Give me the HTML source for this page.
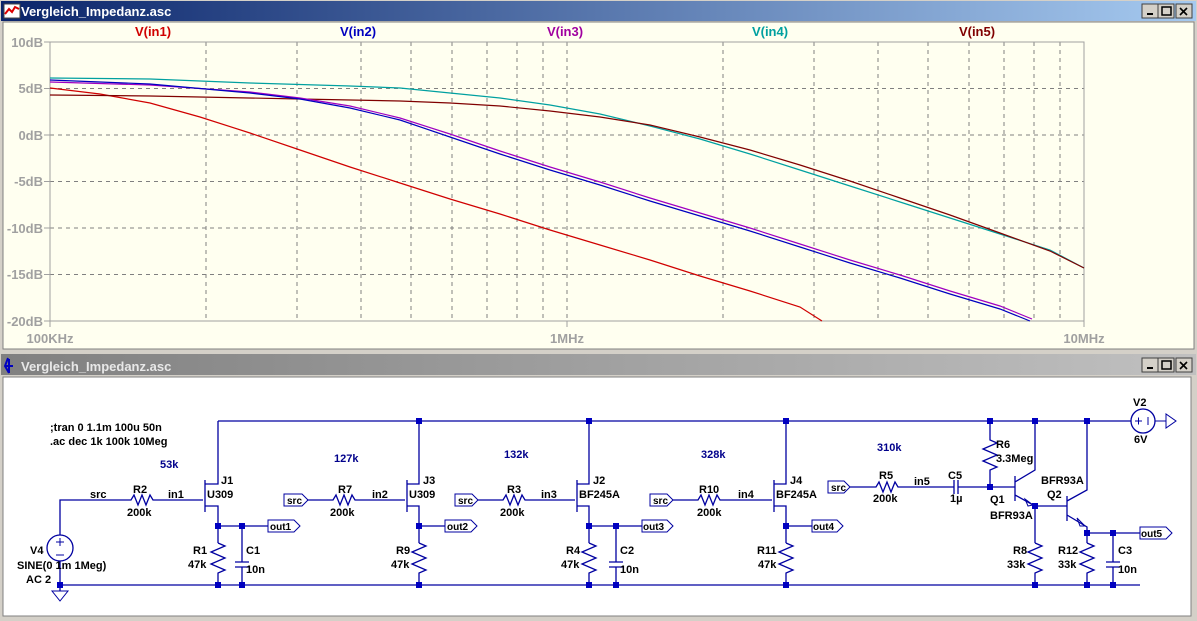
<!DOCTYPE html>
<html><head><meta charset="utf-8">
<style>
html,body{margin:0;padding:0;background:#d4d0c8;width:1197px;height:621px;overflow:hidden;font-family:"Liberation Sans",sans-serif}
svg text{font-family:"Liberation Sans",sans-serif;font-weight:bold}
</style></head><body>
<svg width="1197" height="621" viewBox="0 0 1197 621" xmlns="http://www.w3.org/2000/svg">
<defs>
<linearGradient id="ta" x1="0" x2="1"><stop offset="0" stop-color="#0a246a"/><stop offset="1" stop-color="#a6caf0"/></linearGradient>
<linearGradient id="ti" x1="0" x2="1"><stop offset="0" stop-color="#808080"/><stop offset="1" stop-color="#c0c0c0"/></linearGradient>
</defs>
<rect width="1197" height="621" fill="#d4d0c8"/>
<!-- top window -->
<rect x="1" y="1" width="1195" height="20" fill="url(#ta)"/>
<rect x="4" y="4" width="16" height="14" fill="#fff" stroke="#444"/>
<path d="M5 14 L9 9 L12 12 L15 7 L19 9" stroke="#d00" stroke-width="2" fill="none"/>
<text x="21" y="16" font-size="13" fill="#fff">Vergleich_Impedanz.asc</text>
<g font-size="12" font-family="Liberation Sans">
<rect x="1142" y="4" width="16" height="14" fill="#d4d0c8" stroke="#404040"/><rect x="1147" y="13" width="6" height="2" fill="#000"/>
<rect x="1158" y="4" width="16" height="14" fill="#d4d0c8" stroke="#404040"/><rect x="1162" y="7" width="9" height="8" fill="none" stroke="#000" stroke-width="1.5"/>
<rect x="1176" y="4" width="16" height="14" fill="#d4d0c8" stroke="#404040"/><path d="M1180 8 L1187 15 M1187 8 L1180 15" stroke="#000" stroke-width="1.6"/>
</g>
<rect x="3" y="22" width="1191" height="327" fill="#fffff0" stroke="#808080"/>
<!-- grid -->
<g stroke="#808080" stroke-width="1" stroke-dasharray="4,4" fill="none">
<path d="M206 42V321M297 42V321M361 42V321M411 42V321M452 42V321M487 42V321M517 42V321M543 42V321M567 42V321M723 42V321M814 42V321M878 42V321M928 42V321M969 42V321M1004 42V321M1034 42V321M1060 42V321"/>
<path d="M50 88.5H1084M50 135H1084M50 181.5H1084M50 228H1084M50 274.5H1084"/>
</g>
<rect x="50" y="42" width="1034" height="279" fill="none" stroke="#a0a0a0"/>
<g stroke="#a0a0a0"><path d="M44 42H50M44 88.5H50M44 135H50M44 181.5H50M44 228H50M44 274.5H50M44 321H50M50 321V327M567 321V327M1084 321V327"/></g>
<g font-size="13" fill="#a0a0a0" text-anchor="end">
<text x="43" y="47">10dB</text><text x="43" y="93">5dB</text><text x="43" y="140">0dB</text><text x="43" y="186">-5dB</text><text x="43" y="233">-10dB</text><text x="43" y="279">-15dB</text><text x="43" y="326">-20dB</text>
</g>
<g font-size="13" fill="#a0a0a0" text-anchor="middle">
<text x="50" y="343">100KHz</text><text x="567" y="343">1MHz</text><text x="1084" y="343">10MHz</text>
</g>
<g font-size="13" text-anchor="middle">
<text x="153" y="36" fill="#d00000">V(in1)</text>
<text x="358" y="36" fill="#0000c0">V(in2)</text>
<text x="565" y="36" fill="#a000a0">V(in3)</text>
<text x="770" y="36" fill="#00a0a0">V(in4)</text>
<text x="977" y="36" fill="#800000">V(in5)</text>
</g>
<g fill="none" stroke-width="1.2">
<polyline stroke="#d00000" points="50,88 100,94 150,103 200,117 250,133 300,150 350,167 400,183 450,199 500,214 550,230 600,245 650,260 700,276 750,291 800,307 822,321"/>
<polyline stroke="#00a0a0" points="50,78 150,79 250,83 350,86 400,88 450,93 500,98 550,105 600,114 650,126 700,139 750,154 800,170 850,186 900,202 950,218 1000,234 1050,250 1084,268"/>
<polyline stroke="#800000" points="50,95 150,96 300,99 400,101 450,103 500,106 550,111 600,117 650,125 700,137 750,150 800,165 850,181 900,198 950,215 1000,233 1050,251 1084,268"/>
<polyline stroke="#a000c0" points="50,82 150,85 250,92 300,98 350,106 400,118 450,134 500,151 550,167 600,182 650,198 700,213 750,228 800,244 850,260 900,275 950,291 1000,306 1032,319"/>
<polyline stroke="#0000c0" points="50,80 150,84 250,93 300,99 350,108 400,120 450,137 500,154 550,170 600,185 650,201 700,216 750,231 800,247 850,263 900,278 950,294 1000,309 1030,321"/>
</g>
<!-- bottom window -->
<rect x="1" y="354" width="1195" height="21" fill="url(#ti)"/>
<path d="M8 358 L5 366 L9 373 M5 366 L13 366 M9 359 L9 373" stroke="#0000c0" stroke-width="2" fill="none"/>
<text x="21" y="371" font-size="13" fill="#e8e8e8">Vergleich_Impedanz.asc</text>
<rect x="1142" y="358" width="16" height="14" fill="#d4d0c8" stroke="#404040"/><rect x="1147" y="367" width="6" height="2" fill="#000"/>
<rect x="1158" y="358" width="16" height="14" fill="#d4d0c8" stroke="#404040"/><rect x="1162" y="361" width="9" height="8" fill="none" stroke="#000" stroke-width="1.5"/>
<rect x="1176" y="358" width="16" height="14" fill="#d4d0c8" stroke="#404040"/><path d="M1180 362 L1187 369 M1187 362 L1180 369" stroke="#000" stroke-width="1.6"/>
<rect x="3" y="377" width="1188" height="239" fill="#fff" stroke="#808080"/>
<!-- schematic -->
<g stroke="#0000a0" stroke-width="1.3" fill="none">
<!-- rails -->
<path d="M218 421H1131M60 585H1140"/>
<!-- stage1 -->
<path d="M60 535V500H128M155 500H203M205 480V512M205 484H218V421M205 506H218V543M218 577V585M218 526H268M242 526V562M235 562H249M235 567H249M242 567V585M60 561V585M60 585V591"/>
<path d="M128 500l3 0 3-5 4 10 4-10 4 10 4-10 3 5 2 0"/>
<path d="M218 543l7 3-14 6 14 6-14 6 14 6-7 3v4"/>
<circle cx="60" cy="548" r="13"/>
<path d="M56 542h8M60 538v8M56 555h8" stroke-width="1"/>
<path d="M52 591H68L60 601Z" stroke-width="1"/>
<path d="M268 520H294L300 526L294 532H268Z" stroke-width="1"/>
<!-- stage2 -->
<path d="M307 500H330M357 500H405M407 480V512M407 484H419V421M407 506H419V543M419 577V585M419 526H445"/>
<path d="M330 500l3 0 3-5 4 10 4-10 4 10 4-10 3 5 2 0"/>
<path d="M419 543l7 3-14 6 14 6-14 6 14 6-7 3v4"/>
<path d="M284 494H302L308 500L302 506H284Z" stroke-width="1"/>
<path d="M445 520H471L477 526L471 532H445Z" stroke-width="1"/>
<!-- stage3 -->
<path d="M478 500H500M527 500H575M577 480V512M577 484H589V421M577 506H589V543M589 577V585M589 526H642M616 526V562M609 562H623M609 567H623M616 567V585"/>
<path d="M500 500l3 0 3-5 4 10 4-10 4 10 4-10 3 5 2 0"/>
<path d="M589 543l7 3-14 6 14 6-14 6 14 6-7 3v4"/>
<path d="M455 494H472L478 500L472 506H455Z" stroke-width="1"/>
<path d="M642 520H667L673 526L667 532H642Z" stroke-width="1"/>
<!-- stage4 -->
<path d="M673 500H695M722 500H772M774 480V512M774 484H786V421M774 506H786V543M786 577V585M786 526H812"/>
<path d="M695 500l3 0 3-5 4 10 4-10 4 10 4-10 3 5 2 0"/>
<path d="M786 543l7 3-14 6 14 6-14 6 14 6-7 3v4"/>
<path d="M650 494H667L673 500L667 506H650Z" stroke-width="1"/>
<path d="M812 520H837L843 526L837 532H812Z" stroke-width="1"/>
<!-- stage5 -->
<path d="M850 487H873M900 487H954M954 480V494M958 480V494M958 487H1015M1015 476V501M1015 482L1035 470V421M1015 495L1035 506V543M1035 577V585M1035 506H1067M1067 496V521M1067 501L1087 490V421M1067 515L1087 527V533H1140M1087 533V543M1087 577V585M1113 533V562M1106 562H1120M1106 567H1120M1113 567V585"/>
<path d="M990 421V440l7 3-14 6 14 6-14 6 14 6-7 3V487"/>
<path d="M873 487l3 0 3-5 4 10 4-10 4 10 4-10 3 5 2 0"/>
<path d="M1035 543l7 3-14 6 14 6-14 6 14 6-7 3v4"/>
<path d="M1087 543l7 3-14 6 14 6-14 6 14 6-7 3v4"/>
<path d="M1025 499L1033 505L1028 506Z M1077 518L1085 526L1080 526Z" stroke-width="1"/>
<path d="M828 481H844L850 487L844 493H828Z" stroke-width="1"/>
<path d="M1140 527H1166L1172 533L1166 539H1140Z" stroke-width="1"/>
<circle cx="1143" cy="421" r="12"/>
<path d="M1135 421h7M1138.5 417.5v7M1148 417v8" stroke-width="1"/>
<path d="M1155 421H1166M1166 414V428L1176 421Z" stroke-width="1"/>
</g>
<g fill="#0000c0">
<rect x="57" y="582" width="6" height="6"/>
<rect x="215" y="523" width="6" height="6"/><rect x="239" y="523" width="6" height="6"/><rect x="215" y="582" width="6" height="6"/><rect x="239" y="582" width="6" height="6"/>
<rect x="416" y="418" width="6" height="6"/><rect x="416" y="523" width="6" height="6"/><rect x="416" y="582" width="6" height="6"/>
<rect x="586" y="418" width="6" height="6"/><rect x="586" y="523" width="6" height="6"/><rect x="613" y="523" width="6" height="6"/><rect x="586" y="582" width="6" height="6"/><rect x="613" y="582" width="6" height="6"/>
<rect x="783" y="418" width="6" height="6"/><rect x="783" y="523" width="6" height="6"/><rect x="783" y="582" width="6" height="6"/>
<rect x="987" y="418" width="6" height="6"/><rect x="987" y="484" width="6" height="6"/><rect x="1032" y="418" width="6" height="6"/><rect x="1032" y="503" width="6" height="6"/><rect x="1084" y="418" width="6" height="6"/><rect x="1084" y="530" width="6" height="6"/><rect x="1110" y="530" width="6" height="6"/><rect x="1032" y="582" width="6" height="6"/><rect x="1084" y="582" width="6" height="6"/><rect x="1110" y="582" width="6" height="6"/>
</g>
<g font-size="11" fill="#000">
<text x="50" y="431">;tran 0 1.1m 100u 50n</text>
<text x="50" y="445">.ac dec 1k 100k 10Meg</text>
<text x="90" y="498">src</text><text x="133" y="493">R2</text><text x="127" y="516">200k</text><text x="168" y="498">in1</text>
<text x="221" y="484">J1</text><text x="207" y="498">U309</text>
<text x="193" y="554">R1</text><text x="188" y="568">47k</text><text x="246" y="554">C1</text><text x="246" y="573">10n</text>
<text x="30" y="554">V4</text><text x="17" y="569">SINE(0 1m 1Meg)</text><text x="26" y="583">AC 2</text>
<text x="270" y="530" font-size="10">out1</text>
<text x="287" y="504" font-size="10">src</text><text x="338" y="493">R7</text><text x="330" y="516">200k</text><text x="372" y="498">in2</text>
<text x="423" y="484">J3</text><text x="409" y="498">U309</text><text x="396" y="554">R9</text><text x="391" y="568">47k</text>
<text x="447" y="530" font-size="10">out2</text>
<text x="458" y="504" font-size="10">src</text><text x="507" y="493">R3</text><text x="500" y="516">200k</text><text x="541" y="498">in3</text>
<text x="593" y="484">J2</text><text x="579" y="498">BF245A</text><text x="566" y="554">R4</text><text x="561" y="568">47k</text><text x="620" y="554">C2</text><text x="620" y="573">10n</text>
<text x="643" y="530" font-size="10">out3</text>
<text x="653" y="504" font-size="10">src</text><text x="699" y="493">R10</text><text x="697" y="516">200k</text><text x="738" y="498">in4</text>
<text x="790" y="484">J4</text><text x="776" y="498">BF245A</text><text x="757" y="554">R11</text><text x="758" y="568">47k</text>
<text x="813" y="530" font-size="10">out4</text>
<text x="831" y="491" font-size="10">src</text><text x="879" y="479">R5</text><text x="873" y="502">200k</text><text x="914" y="485">in5</text>
<text x="948" y="479">C5</text><text x="950" y="502">1µ</text>
<text x="996" y="448">R6</text><text x="996" y="462">3.3Meg</text>
<text x="990" y="503">Q1</text><text x="990" y="519">BFR93A</text>
<text x="1041" y="484">BFR93A</text><text x="1047" y="498">Q2</text>
<text x="1013" y="554">R8</text><text x="1007" y="568">33k</text><text x="1058" y="554">R12</text><text x="1058" y="568">33k</text>
<text x="1118" y="554">C3</text><text x="1118" y="573">10n</text>
<text x="1141" y="537" font-size="10">out5</text>
<text x="1133" y="406">V2</text><text x="1134" y="443">6V</text>
</g>
<g font-size="11" fill="#00008b">
<text x="160" y="468">53k</text><text x="334" y="462">127k</text><text x="504" y="458">132k</text><text x="701" y="458">328k</text><text x="877" y="451">310k</text>
</g>
</svg>
</body></html>
